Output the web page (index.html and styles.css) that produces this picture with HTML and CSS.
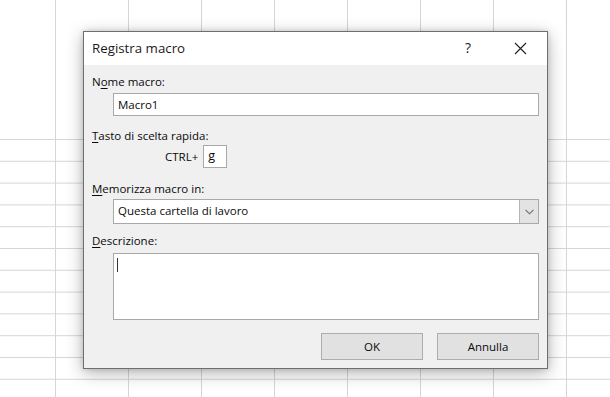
FILE: index.html
```html
<!DOCTYPE html>
<html lang="it">
<head>
<meta charset="utf-8">
<title>Registra macro</title>
<link rel="stylesheet" href="styles.css">
</head>
<body>
<div class="sheet">
  <div class="sheet-top"></div>
  <div class="sheet-rows"></div>

  <div class="dialog">
    <div class="titlebar">
      <span class="title">Registra macro</span>
      <span class="help">?</span>
      <span class="close">
        <svg width="13" height="13" viewBox="0 0 13 13"><path d="M1 1 L12 12 M12 1 L1 12" stroke="#1f1f1f" stroke-width="1.1" fill="none"/></svg>
      </span>
    </div>
    <div class="body">
      <div class="lbl">N<u>o</u>me macro:</div>
      <div class="field name">Macro1</div>

      <div class="lbl lbl-key"><u>T</u>asto di scelta rapida:</div>
      <div class="shortcut">
        <span class="ctrl">CTRL+</span>
        <div class="field key">g</div>
      </div>

      <div class="lbl lbl-store"><u>M</u>emorizza macro in:</div>
      <div class="field select">
        <span class="select-text">Questa cartella di lavoro</span>
        <span class="select-btn">
          <svg width="9" height="6" viewBox="0 0 9 6"><path d="M0.5 0.8 L4.5 4.8 L8.5 0.8" stroke="#6a6a6a" stroke-width="1.1" fill="none"/></svg>
        </span>
      </div>

      <div class="lbl lbl-desc"><u>D</u>escrizione:</div>
      <div class="field desc"><span class="caret"></span></div>

      <div class="buttons">
        <div class="btn">OK</div>
        <div class="btn">Annulla</div>
      </div>
    </div>
  </div>
</div>
</body>
</html>
```

FILE: styles.css
```css
html, body {
  margin: 0;
  padding: 0;
  background: #ffffff;
}

.sheet {
  position: relative;
  width: 610px;
  height: 397px;
  overflow: hidden;
  background-color: #ffffff;
  background-image: linear-gradient(to right, #d6d6d6 0 1px, transparent 1px);
  background-size: 73px 100%;
  background-position: 55px 0;
  font-family: "Open Sans", "Noto Sans", sans-serif;
  color: #0a0a0a;
}

.sheet-top {
  height: 139px;
}

.sheet-rows {
  height: 258px;
  background-image: linear-gradient(to bottom, #d6d6d6 0 1px, transparent 1px);
  background-size: 100% 21.8px;
}

.dialog {
  position: absolute;
  left: 83px;
  top: 31px;
  width: 465px;
  height: 338px;
  box-sizing: border-box;
  border: 1px solid #6f6f6f;
  background: #f0f0f0;
  box-shadow: 0 4px 16px rgba(0, 0, 0, 0.3), 0 0 5px rgba(0, 0, 0, 0.14);
  display: flex;
  flex-direction: column;
}

.titlebar {
  height: 33px;
  background: #ffffff;
  display: flex;
  align-items: center;
  padding-left: 8px;
  flex: none;
}

.title {
  font-size: 13.3px;
  color: #1a1a1a;
  flex: 1;
  margin-top: -1px;
}

.help {
  font-size: 14px;
  color: #1a1a1a;
  width: 12px;
  margin-right: 37px;
  margin-top: -2px;
}

.close {
  width: 13px;
  height: 13px;
  margin-right: 20px;
  display: flex;
}

.body {
  flex: 1;
  display: flex;
  flex-direction: column;
  padding: 9px 8px 0 8px;
  font-size: 11.5px;
}

.lbl {
  line-height: 16px;
  height: 16px;
}

.lbl u {
  text-decoration-thickness: 1px;
  text-underline-offset: 2px;
}

.field {
  background: #ffffff;
  border: 1px solid #a9a9a9;
  box-sizing: border-box;
}

.name {
  margin: 3px 0 0 21px;
  height: 23px;
  line-height: 21px;
  padding-left: 4px;
}

.lbl-key {
  margin-top: 12px;
}

.shortcut {
  display: flex;
  align-items: center;
  margin: 1px 0 0 73px;
  height: 23px;
}

.ctrl {
  margin-right: 5px;
}

.key {
  width: 24px;
  height: 23px;
  line-height: 19px;
  padding-left: 4px;
  font-size: 12.5px;
}

.lbl-store {
  margin-top: 13px;
}

.select {
  margin: 2px 0 0 21px;
  height: 25px;
  display: flex;
  align-items: stretch;
}

.select-text {
  flex: 1;
  padding-left: 4px;
  line-height: 22px;
}

.select-btn {
  width: 18px;
  background: #e3e3e3;
  border-left: 1px solid #b5b5b5;
  display: flex;
  align-items: center;
  justify-content: center;
}

.lbl-desc {
  margin-top: 9px;
}

.desc {
  margin: 4px 0 0 21px;
  height: 67px;
  position: relative;
}

.caret {
  position: absolute;
  left: 3px;
  top: 4px;
  width: 1px;
  height: 14px;
  background: #333;
}

.buttons {
  display: flex;
  justify-content: flex-end;
  gap: 14px;
  margin-top: 13px;
}

.btn {
  width: 102px;
  height: 27px;
  box-sizing: border-box;
  background: #e1e1e1;
  border: 1px solid #adadad;
  text-align: center;
  line-height: 25px;
}
```
